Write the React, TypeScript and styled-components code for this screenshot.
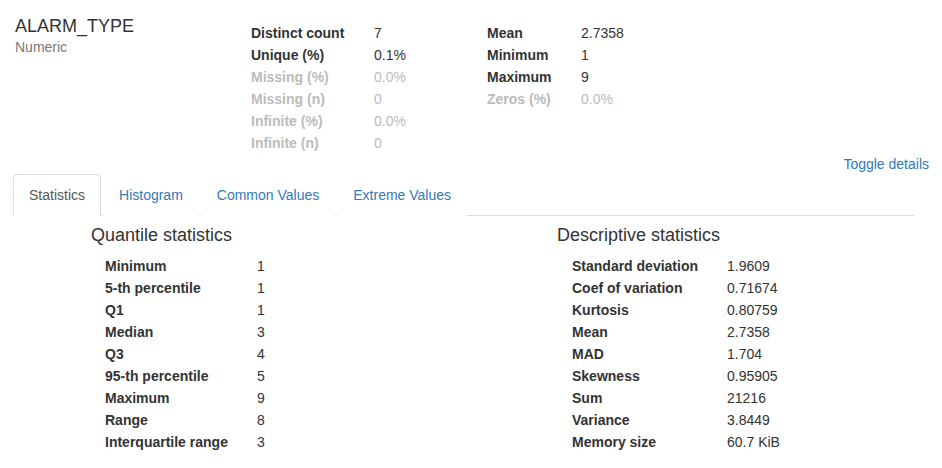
import React from "react";
import styled, { createGlobalStyle } from "styled-components";

const Global = createGlobalStyle`
  html, body { margin: 0; padding: 0; background: #fff; }
  body {
    font-family: "Liberation Sans", Arial, Helvetica, sans-serif;
    font-size: 14px;
    color: #333;
  }
`;

const Page = styled.div`
  width: 942px;
  height: 468px;
  overflow: hidden;
`;

const Header = styled.div`
  display: flex;
  align-items: flex-start;
`;

const TitleBlock = styled.div`
  width: 236px;
  padding: 16px 0 0 15px;
  box-sizing: content-box;
`;

const VarName = styled.div`
  font-size: 18px;
  line-height: 20px;
  color: #333;
`;

const VarType = styled.div`
  font-size: 14px;
  line-height: 22px;
  color: #777;
`;

const StatsTable = styled.table<{ $labelWidth: number; $valueWidth: number }>`
  border-collapse: collapse;
  margin-top: 22px;
  font-size: 14px;
  td { padding: 0; height: 22px; line-height: 22px; white-space: nowrap; }
  td:first-child { width: ${(p) => p.$labelWidth}px; font-weight: bold; }
  td:last-child { width: ${(p) => p.$valueWidth}px; }
`;

const StatRow = styled.tr<{ $muted?: boolean }>`
  color: ${(p) => (p.$muted ? "#bbb" : "#333")};
`;

const ToggleBar = styled.div`
  display: flex;
  justify-content: flex-end;
  padding-right: 13px;
`;

const Link = styled.a`
  color: #337ab7;
  text-decoration: none;
  font-size: 14px;
  line-height: 20px;
  cursor: pointer;
`;

const Tabs = styled.ul`
  display: flex;
  list-style: none;
  margin: 0 0 0 13px;
  padding: 0;
  width: 901px;
  border-bottom: 1px solid #ddd;
`;

const Tab = styled.li<{ $active?: boolean }>`
  margin-right: 2px;
  margin-bottom: -1px;
  padding: 10px 15px;
  line-height: 20px;
  font-size: 14px;
  border: 1px solid ${(p) => (p.$active ? "#ddd" : "transparent")};
  border-bottom-color: ${(p) => (p.$active ? "#fff" : "transparent")};
  border-radius: 4px 4px 0 0;
  color: ${(p) => (p.$active ? "#555" : "#337ab7")};
  background: #fff;
  cursor: pointer;
`;

const TabContent = styled.div`
  display: flex;
  padding-top: 9px;
`;

const Column = styled.div<{ $left: number; $width: number }>`
  margin-left: ${(p) => p.$left}px;
  width: ${(p) => p.$width}px;
`;

const Heading = styled.h4`
  margin: 0;
  font-size: 18px;
  font-weight: normal;
  line-height: 20px;
  color: #333;
`;

const DetailTable = styled.table<{ $labelWidth: number; $indent: number }>`
  border-collapse: collapse;
  margin: 10px 0 0 ${(p) => p.$indent}px;
  font-size: 14px;
  td { padding: 0; height: 22px; line-height: 22px; white-space: nowrap; color: #333; }
  td:first-child { width: ${(p) => p.$labelWidth}px; font-weight: bold; }
`;

type Stat = [string, string, boolean?];

const overview1: Stat[] = [
  ["Distinct count", "7"],
  ["Unique (%)", "0.1%"],
  ["Missing (%)", "0.0%", true],
  ["Missing (n)", "0", true],
  ["Infinite (%)", "0.0%", true],
  ["Infinite (n)", "0", true],
];

const overview2: Stat[] = [
  ["Mean", "2.7358"],
  ["Minimum", "1"],
  ["Maximum", "9"],
  ["Zeros (%)", "0.0%", true],
];

const quantiles: Stat[] = [
  ["Minimum", "1"],
  ["5-th percentile", "1"],
  ["Q1", "1"],
  ["Median", "3"],
  ["Q3", "4"],
  ["95-th percentile", "5"],
  ["Maximum", "9"],
  ["Range", "8"],
  ["Interquartile range", "3"],
];

const descriptive: Stat[] = [
  ["Standard deviation", "1.9609"],
  ["Coef of variation", "0.71674"],
  ["Kurtosis", "0.80759"],
  ["Mean", "2.7358"],
  ["MAD", "1.704"],
  ["Skewness", "0.95905"],
  ["Sum", "21216"],
  ["Variance", "3.8449"],
  ["Memory size", "60.7 KiB"],
];

const tabs = ["Statistics", "Histogram", "Common Values", "Extreme Values"];

export default function App() {
  return (
    <Page>
      <Global />
      <Header>
        <TitleBlock>
          <VarName>ALARM_TYPE</VarName>
          <VarType>Numeric</VarType>
        </TitleBlock>
        <StatsTable $labelWidth={123} $valueWidth={113}>
          <tbody>
            {overview1.map(([k, v, m]) => (
              <StatRow key={k} $muted={m}>
                <td>{k}</td>
                <td>{v}</td>
              </StatRow>
            ))}
          </tbody>
        </StatsTable>
        <StatsTable $labelWidth={94} $valueWidth={100}>
          <tbody>
            {overview2.map(([k, v, m]) => (
              <StatRow key={k} $muted={m}>
                <td>{k}</td>
                <td>{v}</td>
              </StatRow>
            ))}
          </tbody>
        </StatsTable>
      </Header>
      <ToggleBar>
        <Link>Toggle details</Link>
      </ToggleBar>
      <Tabs>
        {tabs.map((t, i) => (
          <Tab key={t} $active={i === 0}>
            {t}
          </Tab>
        ))}
      </Tabs>
      <TabContent>
        <Column $left={91} $width={466}>
          <Heading>Quantile statistics</Heading>
          <DetailTable $labelWidth={152} $indent={14}>
            <tbody>
              {quantiles.map(([k, v]) => (
                <tr key={k}>
                  <td>{k}</td>
                  <td>{v}</td>
                </tr>
              ))}
            </tbody>
          </DetailTable>
        </Column>
        <Column $left={0} $width={380}>
          <Heading>Descriptive statistics</Heading>
          <DetailTable $labelWidth={155} $indent={15}>
            <tbody>
              {descriptive.map(([k, v]) => (
                <tr key={k}>
                  <td>{k}</td>
                  <td>{v}</td>
                </tr>
              ))}
            </tbody>
          </DetailTable>
        </Column>
      </TabContent>
    </Page>
  );
}
